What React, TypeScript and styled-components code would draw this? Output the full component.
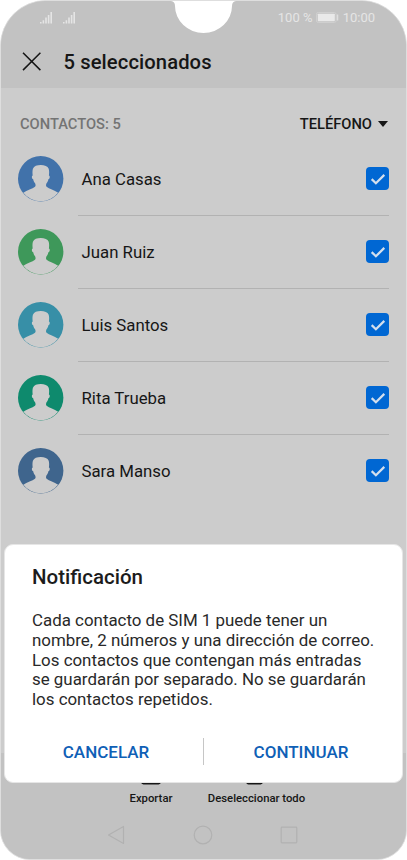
import React from 'react';
import styled, { createGlobalStyle } from 'styled-components';

const GlobalStyle = createGlobalStyle`
  * { box-sizing: border-box; }
  body { margin: 0; background: #fff; font-family: Roboto, "Liberation Sans", sans-serif; color: #161616; }
  button { font: inherit; color: inherit; background: none; border: 0; padding: 0; display: block; }
  svg { display: block; flex: none; }
`;

const Phone = styled.main`
  position: relative;
  width: 407px;
  height: 860px;
  overflow: hidden;
  display: flex;
  flex-direction: column;
  background: #cccccc;
  border: 1px solid #dedede;
  border-radius: 46px 46px 30px 30px;
`;

const Notch = styled.svg`
  position: absolute;
  top: -1px;
  left: 167px;
`;

const Header = styled.header`
  height: 87px;
  flex: none;
  background: #c2c2c2;
`;

const StatusBar = styled.div`
  height: 32px;
  display: flex;
  align-items: center;
  padding: 1px 31px 0 38px;
  color: #e5e5e5;
  font-size: 13px;
  line-height: 16px;
`;

const Signals = styled.div`
  display: flex;
  gap: 9px;
  margin-right: auto;
`;

const Percent = styled.span`
  letter-spacing: 0.05px;
  margin-right: 3px;
`;

const Clock = styled.span`
  margin-left: 4px;
`;

const TitleBar = styled.div`
  height: 55px;
  display: flex;
  align-items: center;
  padding: 2px 0 0 21px;
`;

const Title = styled.h1`
  margin: 0 0 0 21.5px;
  font-size: 20.2px;
  line-height: 24px;
  font-weight: 500;
  letter-spacing: 0.1px;
`;

const ListHeading = styled.div`
  height: 55px;
  flex: none;
  display: flex;
  align-items: center;
  justify-content: space-between;
  padding: 17px 18px 0 19px;
  font-size: 14.7px;
  line-height: 18px;
  font-weight: 500;
`;

const Count = styled.span`
  color: #747474;
`;

const Filter = styled.button`
  display: flex;
  align-items: center;
  gap: 6px;
`;

const List = styled.ul`
  list-style: none;
  margin: 0;
  padding: 0;
  flex: 1;
`;

const Row = styled.li`
  display: flex;
  height: 73px;
  padding: 0 17px 0 17px;
`;

const AvatarCell = styled.div`
  width: 60px;
  padding-top: 13px;
`;

const RowBody = styled.div<{ $last: boolean }>`
  flex: 1;
  display: flex;
  align-items: center;
  justify-content: space-between;
  padding-left: 3.5px;
  border-bottom: 1px solid ${(p) => (p.$last ? 'transparent' : '#b2b2b2')};
`;

const Name = styled.span`
  font-size: 16.8px;
  line-height: 22px;
`;

const Check = styled.span`
  width: 23px;
  height: 23px;
  margin-bottom: 1.4px;
  border-radius: 4px;
  background: #0067d3;
`;

const BottomBar = styled.footer`
  height: 106px;
  flex: none;
  background: #c2c2c2;
  display: flex;
  flex-direction: column;
`;

const Actions = styled.div`
  height: 54px;
  display: flex;
  padding: 11px 0 0 97px;
`;

const Action = styled.button<{ $width: number }>`
  width: ${(p) => p.$width}px;
  display: flex;
  flex-direction: column;
  align-items: center;
  gap: 7px;
  font-size: 11.3px;
  line-height: 14px;
  font-weight: 500;
  white-space: nowrap;
`;

const NavBar = styled.nav`
  display: flex;
  justify-content: space-between;
  padding: 18px 108px 0 106px;
`;

const Dialog = styled.section`
  position: absolute;
  left: 3px;
  right: 3px;
  top: 543px;
  height: 239px;
  padding: 20px 0 0 27px;
  background: #fff;
  border: 1px solid #e6e6e6;
  border-radius: 9px;
  color: #292929;
`;

const DialogTitle = styled.h2`
  margin: 0;
  color: #1c1c1c;
  font-size: 20.5px;
  line-height: 24px;
  font-weight: 500;
`;

const Message = styled.p`
  margin: 22px 0 0;
  font-size: 16.9px;
  line-height: 19.8px;
  white-space: pre-line;
`;

const DialogActions = styled.div`
  display: flex;
  align-items: center;
  height: 27px;
  margin: 28px 0 0 -27px;
`;

const DialogButton = styled.button<{ $padLeft?: number; $padRight?: number }>`
  flex: 1;
  padding: 1px ${(p) => p.$padRight ?? 0}px 0 ${(p) => p.$padLeft ?? 0}px;
  text-align: center;
  color: #0f60b6;
  font-size: 17px;
  line-height: 24px;
  font-weight: 500;
`;

const Divider = styled.div`
  width: 1px;
  height: 27px;
  background: #c6c6c6;
`;

const contacts = [
  { name: 'Ana Casas', color: '#4172aa' },
  { name: 'Juan Ruiz', color: '#3e985a' },
  { name: 'Luis Santos', color: '#378fa7' },
  { name: 'Rita Trueba', color: '#0e8a6d' },
  { name: 'Sara Manso', color: '#3f658d' },
];

const Signal = () => (
  <svg width="14" height="12" viewBox="0 0 14 12" fill="#e5e5e5">
    <path d="M1 10h1.600v1.500H1zM3.600 8.300h1.600v3.200H3.600zM6.200 5.500h1.600v6H6.200zM8.800 2.900h1.600v8.600H8.800zM11.400 0H13v11.500h-1.600z" />
  </svg>
);

const Battery = () => (
  <svg width="23" height="12" viewBox="0 0 23 12">
    <rect x=".5" y=".5" width="19.500" height="10" rx="1.600" fill="none" stroke="#cfcfcf" />
    <rect x="1.800" y="1.700" width="17" height="7.600" rx=".6" fill="#e9e9e9" />
    <path d="M21.500 2.600v6" stroke="#dedede" strokeWidth="1.500" />
  </svg>
);

const Avatar = ({ color }: { color: string }) => (
  <svg width="46" height="46" viewBox="0 0 46 46">
    <circle cx="22.700" cy="22.800" r="22.700" fill={color} />
    <path
      fill="#cccccc"
      d="M5.300 36.700C9 34.600 14.500 32.600 17 30.800C17.900 29.900 17.600 28.600 17.200 27.500C16.100 26.200 15.500 24.900 15.200 23.300C13.900 22.800 13.200 19.900 14.700 19.600C14.400 17.500 14.300 14.500 14.900 12.700C16 9.900 19 8.900 22.800 8.900C26.600 8.900 29.700 10 30.700 12.700C31.300 14.500 31.200 17.500 30.900 19.600C32.400 19.900 31.700 22.800 30.400 23.300C30.100 24.900 29.500 26.200 28.400 27.500C28 28.600 27.700 29.900 28.600 30.800C31 32.600 36.400 34.600 40.100 36.700A22 22 0 0 1 5.300 36.700Z"
    />
  </svg>
);

export default function App() {
  return (
    <>
      <GlobalStyle />
      <Phone>
        <Header>
          <StatusBar>
            <Signals>
              <Signal />
              <Signal />
            </Signals>
            <Percent>100 %</Percent>
            <Battery />
            <Clock>10:00</Clock>
          </StatusBar>
          <TitleBar>
            <svg width="20" height="20" viewBox="0 0 20 20">
              <path d="M1 .7 18.400 18.100M18.400 .7 1 18.100" stroke="#161616" strokeWidth="1.500" />
            </svg>
            <Title>5 seleccionados</Title>
          </TitleBar>
        </Header>
        <ListHeading>
          <Count>CONTACTOS: 5</Count>
          <Filter>
            TELÉFONO
            <svg width="10" height="7" viewBox="0 0 10 7">
              <path d="M0 0h10L5 6Z" fill="#161616" />
            </svg>
          </Filter>
        </ListHeading>
        <List>
          {contacts.map((c, i) => (
            <Row key={c.name}>
              <AvatarCell>
                <Avatar color={c.color} />
              </AvatarCell>
              <RowBody $last={i === contacts.length - 1}>
                <Name>{c.name}</Name>
                <Check>
                  <svg width="23" height="23" viewBox="0 0 23 23" fill="none">
                    <path d="m5.700 12.100 4.200 4.200 8.400-8.400" stroke="#d3dfed" strokeWidth="2.200" />
                  </svg>
                </Check>
              </RowBody>
            </Row>
          ))}
        </List>
        <BottomBar>
          <Actions>
            <Action $width={106}>
              <svg width="20" height="21" viewBox="0 0 20 21">
                <path d="M1 12v6q0 1.500 1.500 1.500h15q1.500 0 1.500-1.500v-6M10 1v13M5 6l5-5 5 5" fill="none" stroke="#161616" strokeWidth="1.800" />
              </svg>
              Exportar
            </Action>
            <Action $width={105}>
              <svg width="22" height="21" viewBox="0 0 22 21">
                <rect x="1" y="3" width="15" height="16.500" rx="1.500" fill="none" stroke="#161616" strokeWidth="1.800" />
              </svg>
              Deseleccionar todo
            </Action>
          </Actions>
          <NavBar>
            <svg width="18" height="20" viewBox="0 0 18 20">
              <path d="M16.500 1.500v17L1.500 10Z" fill="none" stroke="#b1b1b1" strokeWidth="1.200" strokeLinejoin="round" />
            </svg>
            <svg width="20" height="20" viewBox="0 0 20 20">
              <circle cx="10" cy="10" r="8.800" fill="none" stroke="#b1b1b1" strokeWidth="1.200" />
            </svg>
            <svg width="18" height="20" viewBox="0 0 18 20">
              <rect x="1.200" y="2.200" width="15.600" height="15.600" rx=".8" fill="none" stroke="#b1b1b1" strokeWidth="1.200" />
            </svg>
          </NavBar>
        </BottomBar>
        <Notch width="72" height="34" viewBox="0 0 72 34">
          <path d="M0 0h72v1h-4q-4 .4-4 5a28.500 27 0 0 1-57 0Q7 1.400 3 1H0Z" fill="#fff" />
        </Notch>
        <Dialog role="dialog" aria-label="Notificación">
          <DialogTitle>Notificación</DialogTitle>
          <Message>
            {'Cada contacto de SIM 1 puede tener un\nnombre, 2 números y una dirección de correo.\nLos contactos que contengan más entradas\nse guardarán por separado. No se guardarán\nlos contactos repetidos.'}
          </Message>
          <DialogActions>
            <DialogButton $padLeft={4}>CANCELAR</DialogButton>
            <Divider />
            <DialogButton $padRight={4}>CONTINUAR</DialogButton>
          </DialogActions>
        </Dialog>
      </Phone>
    </>
  );
}
